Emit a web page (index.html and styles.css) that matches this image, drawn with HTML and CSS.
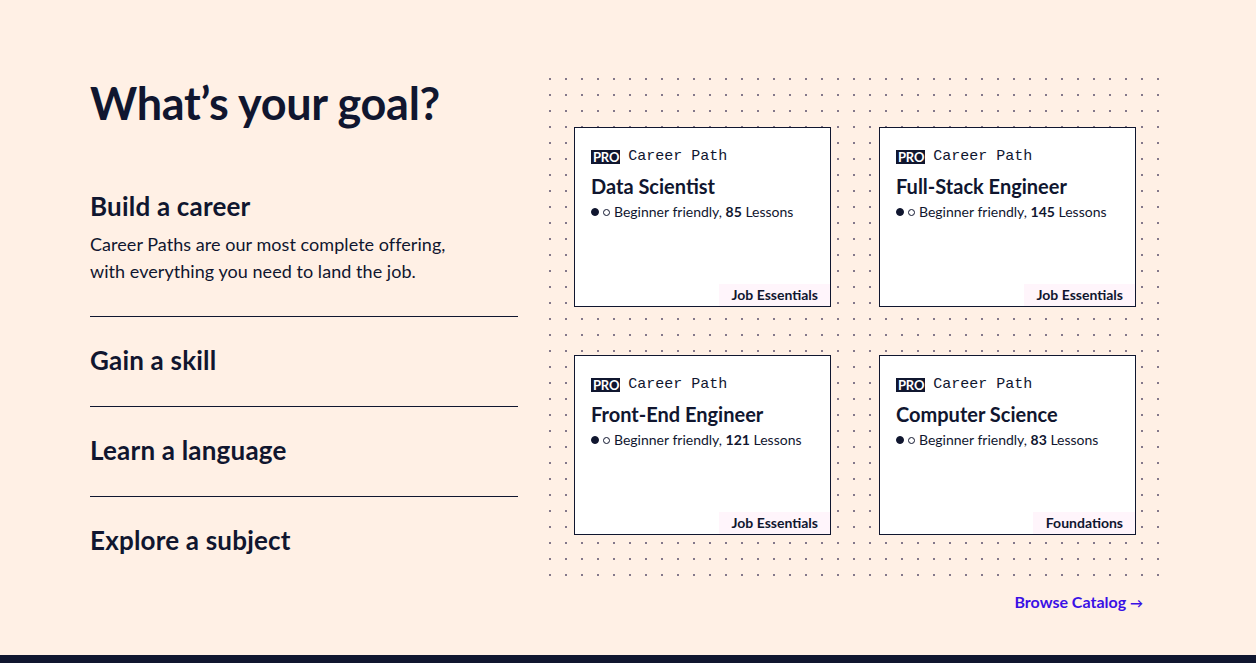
FILE: index.html
```html
<!DOCTYPE html>
<html lang="en">
<head>
<meta charset="utf-8">
<title>What's your goal?</title>
<link rel="stylesheet" href="styles.css">
</head>
<body>
<section class="goals">
  <div class="left">
    <h1 class="title">What’s your goal?</h1>
    <ul class="goal-list">
      <li class="goal active">
        <h2 class="goal-name">Build a career</h2>
        <p class="goal-desc">Career Paths are our most complete offering,<br>with everything you need to land the job.</p>
      </li>
      <li class="goal"><h2 class="goal-name">Gain a skill</h2></li>
      <li class="goal"><h2 class="goal-name">Learn a language</h2></li>
      <li class="goal last"><h2 class="goal-name">Explore a subject</h2></li>
    </ul>
  </div>
  <div class="right">
    <div class="dots">
      <div class="card">
        <div class="eyebrow"><span class="pro">PRO</span><span class="type">Career Path</span></div>
        <h3 class="card-title">Data Scientist</h3>
        <div class="meta"><span class="dot filled"></span><span class="dot"></span><span class="meta-text">Beginner friendly, <b>85</b> Lessons</span></div>
        <div class="tag">Job Essentials</div>
      </div>
      <div class="card">
        <div class="eyebrow"><span class="pro">PRO</span><span class="type">Career Path</span></div>
        <h3 class="card-title">Full-Stack Engineer</h3>
        <div class="meta"><span class="dot filled"></span><span class="dot"></span><span class="meta-text">Beginner friendly, <b>145</b> Lessons</span></div>
        <div class="tag">Job Essentials</div>
      </div>
      <div class="card">
        <div class="eyebrow"><span class="pro">PRO</span><span class="type">Career Path</span></div>
        <h3 class="card-title">Front-End Engineer</h3>
        <div class="meta"><span class="dot filled"></span><span class="dot"></span><span class="meta-text">Beginner friendly, <b>121</b> Lessons</span></div>
        <div class="tag">Job Essentials</div>
      </div>
      <div class="card">
        <div class="eyebrow"><span class="pro">PRO</span><span class="type">Career Path</span></div>
        <h3 class="card-title">Computer Science</h3>
        <div class="meta"><span class="dot filled"></span><span class="dot"></span><span class="meta-text">Beginner friendly, <b>83</b> Lessons</span></div>
        <div class="tag">Foundations</div>
      </div>
    </div>
    <a class="browse" href="#">Browse Catalog <span class="arrow">→</span></a>
  </div>
</section>
<footer class="footer"></footer>
</body>
</html>
```

FILE: styles.css
```css
* { box-sizing: border-box; }
html, body { margin: 0; padding: 0; }
body {
  background: #fff0e5;
  color: #10162f;
  font-family: "Lato", "Liberation Sans", sans-serif;
  overflow: hidden;
}
.goals {
  display: flex;
  gap: 24px;
  padding: 71px 0 0 90px;
  height: 655px;
}
.left { width: 428px; }
.title {
  margin: 4px 0 0;
  font-size: 45px;
  line-height: 56px;
  font-weight: 700;
  letter-spacing: -0.3px;
}
.goal-list { list-style: none; margin: 62px 0 0; padding: 0; }
.goal { border-bottom: 1px solid #10162f; padding: 30px 0 33px; }
.goal.active { padding: 0 0 31px; }
.goal.last { border-bottom: none; }
.goal-name {
  margin: 0;
  font-size: 26px;
  line-height: 26px;
  font-weight: 700;
  letter-spacing: 0.2px;
}
.goal-desc {
  margin: 12px 0 0;
  font-size: 18px;
  line-height: 27px;
  letter-spacing: 0.05px;
}
.right { display: flex; flex-direction: column; }
.dots {
  width: 624px;
  height: 512px;
  padding: 56px 29px 48px 32px;
  display: grid;
  grid-template-columns: 257px 257px;
  grid-template-rows: 180px 180px;
  column-gap: 48px;
  row-gap: 48px;
  background-image: radial-gradient(circle, #84788a 0.9px, transparent 1.3px);
  background-size: 16px 16px;
  background-position: 0 0;
}
.card {
  background: #fff;
  border: 1px solid #10162f;
  display: flex;
  flex-direction: column;
  padding: 21px 0 0 16px;
}
.eyebrow { display: flex; align-items: center; gap: 8px; height: 16px; }
.pro {
  background: #10162f;
  color: #fff;
  font-weight: 700;
  font-size: 13px;
  line-height: 14px;
  padding: 0 1px 0 2px;
  letter-spacing: -0.2px;
}
.type {
  font-family: "Liberation Mono", monospace;
  font-size: 15px;
  line-height: 16px;
}
.card-title {
  margin: 9px 0 0;
  font-size: 20px;
  line-height: 24px;
  font-weight: 700;
}
.meta { display: flex; align-items: center; margin-top: 5px; font-size: 14px; line-height: 18px; }
.dot {
  width: 7px; height: 7px; border-radius: 50%;
  border: 1px solid #10162f; margin-right: 4px;
}
.dot.filled { background: #10162f; width: 8px; height: 8px; }
.meta-text b { font-weight: 700; }
.tag {
  margin-top: auto;
  align-self: flex-end;
  background: #fff5fb;
  font-weight: 700;
  font-size: 14px;
  line-height: 22px;
  padding: 0 12px 0 13px;
}
.browse {
  align-self: flex-end;
  margin: 9px 23px 0 0;
  color: #3a10e5;
  font-weight: 700;
  font-size: 16px;
  text-decoration: none;
}
.arrow { font-size: 13px; }
.footer { height: 8px; background: #10162f; }
```
